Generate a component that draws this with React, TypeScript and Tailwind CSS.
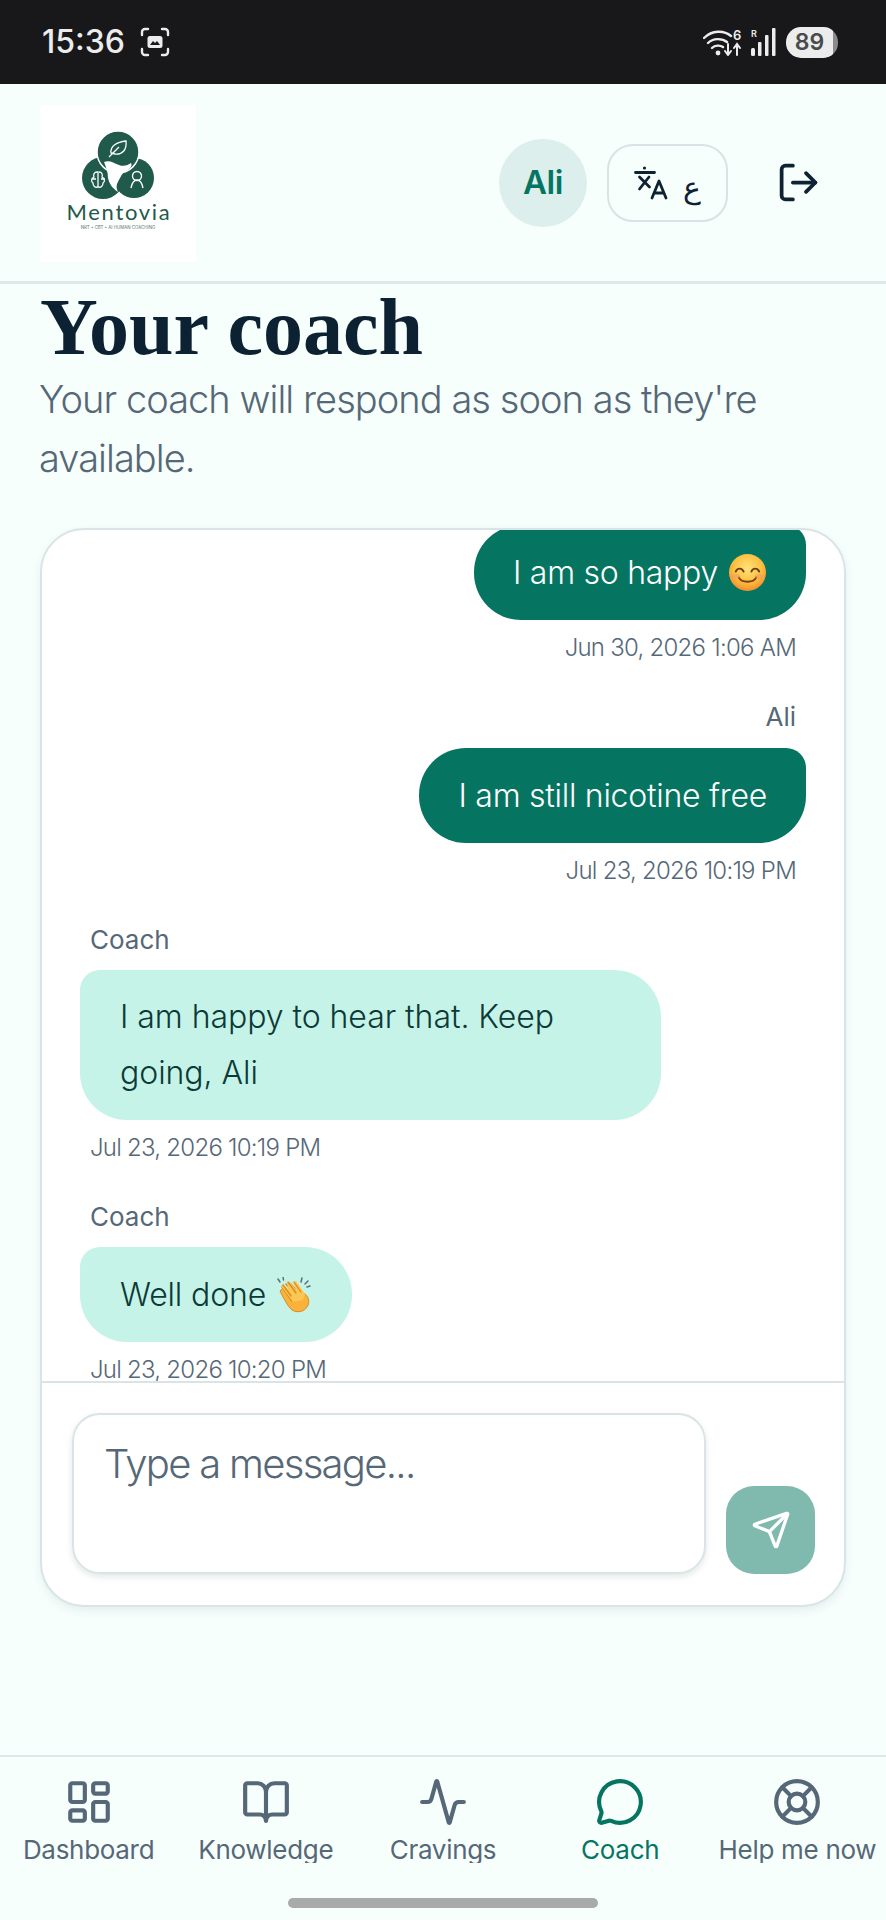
import { Activity, BookOpen, LayoutDashboard, LifeBuoy, LogOut, MessageCircle, Send } from 'lucide-react'

const tabs = [
  { label: 'Dashboard', icon: LayoutDashboard },
  { label: 'Knowledge', icon: BookOpen },
  { label: 'Cravings', icon: Activity },
  { label: 'Coach', icon: MessageCircle, active: true },
  { label: 'Help me now', icon: LifeBuoy },
]

function Smile() {
  return (
    <svg viewBox="0 0 40 40" className="inline-block w-[39px] h-[39px]">
      <defs>
        <radialGradient id="smileFace" cx="50%" cy="38%" r="65%">
          <stop offset="0%" stopColor="#fde37a" />
          <stop offset="60%" stopColor="#fbbf3f" />
          <stop offset="100%" stopColor="#f2872a" />
        </radialGradient>
      </defs>
      <circle cx="20" cy="20" r="19" fill="url(#smileFace)" />
      <path d="M8 19c1.5-4 6-4 8 0M24 19c1.5-4 6-4 8 0" fill="none" stroke="#6b3a12" strokeWidth="2" strokeLinecap="round" />
      <path d="M11 25c3 6 15 6 18 0" fill="none" stroke="#7a3f12" strokeWidth="2" strokeLinecap="round" />
      <ellipse cx="8" cy="24" rx="4" ry="2.500" fill="#f59a6b" opacity=".6" />
      <ellipse cx="32" cy="24" rx="4" ry="2.500" fill="#f59a6b" opacity=".6" />
    </svg>
  )
}

function Clap() {
  return (
    <svg viewBox="0 0 36 36" className="inline-block w-[36px] h-[36px]">
      <path d="M4 14l3-3 4 3 5-3 13 6c4 3 5 9 2 13-3 5-10 6-15 3-4-3-9-13-12-19z" fill="#f9b33d" stroke="#d98a1f" strokeWidth="1" />
      <path d="M6 10l10 14M10 7l10 12M15 7l8 10" fill="none" stroke="#d98a1f" strokeWidth="1.600" strokeLinecap="round" />
      <path d="M5 9l2-2 5 5-1-6 3-1 6 8-3-8 3-1 9 13-2 6-10 2z" fill="#fbc653" />
      <path d="M7 8l8 11M12 5l8 11M18 5l7 10" fill="none" stroke="#d98a1f" strokeWidth="1.300" strokeLinecap="round" />
      <path d="M2 2l2 3M7 0l.5 3M26 1l-1 4M32 4l-3 3M34 9l-3 1" fill="none" stroke="#55707e" strokeWidth="1.500" strokeLinecap="round" />
    </svg>
  )
}

function Logo() {
  return (
    <div className="w-[156px] h-[157px] bg-white">
      <svg viewBox="0 0 156 157" className="w-[156px] h-[157px]">
        <circle cx="63" cy="73" r="21" fill="#1f5a4a" />
        <circle cx="94" cy="73" r="20" fill="#1f5a4a" />
        <circle cx="78" cy="47" r="21" fill="#1f5a4a" stroke="#fff" strokeWidth="1.500" />
        <path d="M64 57c6-2 9 1 15 3 5 2 9 0 12-2 2 3-2 7-7 9-3 3-5 8-7 12-1 3 0 6 1 8-6-4-9-9-10-14 0-6-2-11-4-16z" fill="#fff" />
        <path d="M71 48c-1-7 6-11 15-12 1 9-4 14-11 13zM69 52l10-10" fill="none" stroke="#fff" strokeWidth="1.300" />
        <path d="M57 67c-3 0-4 3-3 5-3 1-3 5-1 6 0 3 2 5 5 4V67zM59 67c3 0 4 3 3 5 3 1 3 5 1 6 0 3-2 5-5 4M52 74h4M61 74h4" fill="none" stroke="#fff" strokeWidth="1.300" />
        <circle cx="97" cy="71" r="4.500" fill="none" stroke="#fff" strokeWidth="1.400" />
        <path d="M91 83c1-5 3-8 6-8s5 3 6 8" fill="none" stroke="#fff" strokeWidth="1.400" />
        <text x="79" y="115" textAnchor="middle" fontSize="22" letterSpacing="1.700" fill="#1f5a4a" style={{ fontFamily: 'Lato, sans-serif' }}>Mentovia</text>
        <text x="78" y="124" textAnchor="middle" fontSize="4.400" fill="#5b7a70" style={{ fontFamily: 'Inter, sans-serif' }}>NRT • CBT • AI HUMAN COACHING</text>
      </svg>
    </div>
  )
}

export default function App() {
  return (
    <div className="w-[886px] h-[1920px] flex flex-col bg-[#f7fffd] overflow-hidden font-['Inter',sans-serif] text-[#0f2233]">
      {/* status bar */}
      <div className="h-[84px] shrink-0 bg-[#18181a] flex items-center justify-between pl-[42px] pr-[48px] text-[#ececec]">
        <div className="flex items-center gap-[15px]">
          <span className="text-[32px] font-medium leading-none">15:36</span>
          <svg viewBox="0 0 30 30" className="w-[30px] h-[30px]" fill="none" stroke="#ececec" strokeWidth="2.400" strokeLinecap="round">
            <path d="M2 8V5a3 3 0 0 1 3-3h3M22 2h3a3 3 0 0 1 3 3v3M28 22v3a3 3 0 0 1-3 3h-3M8 28H5a3 3 0 0 1-3-3v-3" />
            <rect x="7.500" y="9" width="15" height="12" rx="2.500" fill="#ececec" stroke="none" />
            <path d="M10 18l3-4 2 2 2-2 3 4z" fill="#18181a" stroke="none" />
          </svg>
        </div>
        <div className="flex items-center gap-[8px]">
          <svg viewBox="0 0 40 28" className="w-[40px] h-[28px]" fill="none" stroke="#ececec" strokeWidth="2.400" strokeLinecap="round">
            <path d="M1 10c8-8 20-8 27-2M5 15c5-5 14-5 19-1M9 20c3-3 8-3 11-1" />
            <circle cx="15" cy="25" r="2.400" fill="#ececec" stroke="none" />
            <path d="M25 16v11M22 23l3 4 3-4M34 27V16M31 20l3-4 3 4" strokeWidth="2" />
            <text x="30" y="12" fontSize="13" fontWeight="600" fill="#ececec" stroke="none">6</text>
          </svg>
          <svg viewBox="0 0 26 28" className="w-[26px] h-[28px]">
            <text x="0" y="9" fontSize="9" fontWeight="600" fill="#ececec">R</text>
            <rect x="0" y="20" width="4" height="8" rx="1.500" fill="#ececec" />
            <rect x="7" y="14" width="3.500" height="14" rx="1" fill="#ececec" />
            <rect x="14" y="7" width="3.500" height="21" rx="1" fill="#ececec" />
            <rect x="21" y="0" width="3.500" height="28" rx="1" fill="#ececec" />
          </svg>
          <div className="w-[52px] h-[31px] ml-[1px] rounded-[15px] bg-[#8b8b8b] overflow-hidden">
            <div className="w-[47px] h-full bg-[#ececec] rounded-l-[15px] flex items-center justify-center text-[#4a4a4c] text-[23px] font-semibold leading-none">89</div>
          </div>
        </div>
      </div>

      {/* header */}
      <div className="h-[200px] shrink-0 border-b-[3px] border-[#dfe7ea] flex items-start justify-between pl-[40px] pr-[65px] pt-[21px]">
        <Logo />
        <div className="flex items-center h-[157px] -mt-[1px]">
          <div className="w-[88px] h-[88px] rounded-full bg-[#dcefed] flex items-center justify-center text-[33px] font-semibold tracking-[-0.5px] text-[#057562]">Ali</div>
          <div className="w-[121px] h-[78px] ml-[20px] rounded-[26px] border-[2px] border-[#d9e3e5] flex items-center justify-center gap-[15px]">
            <svg viewBox="0 0 34 34" className="w-[34px] h-[34px]" fill="none" stroke="#0f2233" strokeWidth="2.800" strokeLinecap="round" strokeLinejoin="round">
              <circle cx="10.500" cy="2" r="1.600" fill="#0f2233" stroke="none" />
              <path d="M1.500 6.500h19M5.500 11l10 10M15 11L5.500 23" />
              <path d="M18 32l7-17 7 17M20.500 27h9" />
            </svg>
            <span className="text-[30px] leading-none mt-[10px] font-['DejaVu_Sans',sans-serif] font-light">ع</span>
          </div>
          <LogOut className="w-[45px] h-[45px] ml-[48px]" strokeWidth={2} />
        </div>
      </div>

      {/* page title */}
      <div className="pl-[40px] pr-[40px]">
        <h1 className="text-[80px] leading-[88px] -mt-[1px] font-bold font-['Liberation_Serif',serif] text-[#0c2232]">Your coach</h1>
        <p className="text-[38px] leading-[59px] mt-[-1px] -ml-[1px] font-light tracking-[-0.95px] text-[#566877]">Your coach will respond as soon as they're available.</p>
      </div>

      {/* chat card */}
      <div className="mx-[40px] mt-[40px] h-[1079px] shrink-0 bg-white rounded-[44px] border-[2px] border-[#d8e4e5] shadow-[0_4px_10px_rgba(15,70,60,0.08)] flex flex-col overflow-hidden">
        <div className="h-[853px] shrink-0 overflow-hidden pl-[38px] pr-[38px] border-b-[2px] border-[#d8e4e5]">
          <div className="flex flex-col items-end -mt-[5px]">
            <div className="bg-[#057562] text-white text-[32px] font-light tracking-[-0.27px] h-[95px] flex items-center gap-[10px] px-[39px] rounded-[47px] rounded-tr-[20px]">
              I am so happy <Smile />
            </div>
            <div className="mt-[12px] mr-[10px] text-[24px] leading-[32px] font-light tracking-[-0.75px] text-[#566877]">Jun 30, 2026 1:06 AM</div>
            <div className="mt-[36px] mr-[10px] text-[26px] leading-[34px] text-[#566877]">Ali</div>
            <div className="mt-[14px] bg-[#057562] text-white text-[32px] font-light tracking-[-0.27px] h-[95px] flex items-center px-[39px] rounded-[47px] rounded-tr-[20px]">I am still nicotine free</div>
            <div className="mt-[12px] mr-[10px] text-[24px] leading-[32px] font-light tracking-[-0.75px] text-[#566877]">Jul 23, 2026 10:19 PM</div>
          </div>
          <div className="flex flex-col items-start mt-[36px]">
            <div className="ml-[10px] text-[26px] leading-[34px] text-[#566877]">Coach</div>
            <div className="mt-[13px] w-[581px] bg-[#c6f3e7] text-[#0b3a38] text-[32px] font-light tracking-[-0.05px] leading-[56px] px-[40px] py-[19px] rounded-[47px] rounded-tl-[20px]">I am happy to hear that. Keep going, Ali</div>
            <div className="mt-[12px] ml-[10px] text-[24px] leading-[32px] font-light tracking-[-0.75px] text-[#566877]">Jul 23, 2026 10:19 PM</div>
            <div className="mt-[36px] ml-[10px] text-[26px] leading-[34px] text-[#566877]">Coach</div>
            <div className="mt-[13px] bg-[#c6f3e7] text-[#0b3a38] text-[32px] font-light tracking-[-0.15px] h-[95px] flex items-center gap-[10px] px-[40px] rounded-[47px] rounded-tl-[20px]">Well done <Clap /></div>
            <div className="mt-[12px] ml-[10px] text-[24px] leading-[32px] font-light tracking-[-0.75px] text-[#566877]">Jul 23, 2026 10:20 PM</div>
          </div>
        </div>
        <div className="flex items-end gap-[20px] pl-[30px] pr-[29px] pt-[30px]">
          <div className="w-[635px] h-[161px] rounded-[28px] border-[2px] border-[#d8e4e5] shadow-[0_3px_6px_rgba(15,70,60,0.12)] px-[30px] py-[24px] text-[40px] leading-[50px] font-light tracking-[-1.7px] text-[#566877]">Type a message...</div>
          <button className="w-[89px] h-[88px] rounded-[28px] bg-[#80b9ae] flex items-center justify-center">
            <Send className="w-[40px] h-[40px] text-white" strokeWidth={2} />
          </button>
        </div>
      </div>

      {/* bottom nav */}
      <div className="mt-auto h-[165px] shrink-0 border-t-[2px] border-[#dfe7ea] relative">
        <div className="grid grid-cols-5 pt-[20px]">
          {tabs.map((t) => (
            <div key={t.label} className={`flex flex-col items-center ${t.active ? 'text-[#057562]' : 'text-[#566877]'}`}>
              <t.icon className="w-[50px] h-[50px]" strokeWidth={2} />
              <div className="h-[34px] mt-[2px] overflow-hidden text-[26px] leading-[42px] tracking-[-0.3px] whitespace-nowrap">{t.label}</div>
            </div>
          ))}
        </div>
        <div className="absolute left-[288px] top-[141px] w-[310px] h-[10px] rounded-full bg-[#a8abaa]" />
      </div>
    </div>
  )
}
